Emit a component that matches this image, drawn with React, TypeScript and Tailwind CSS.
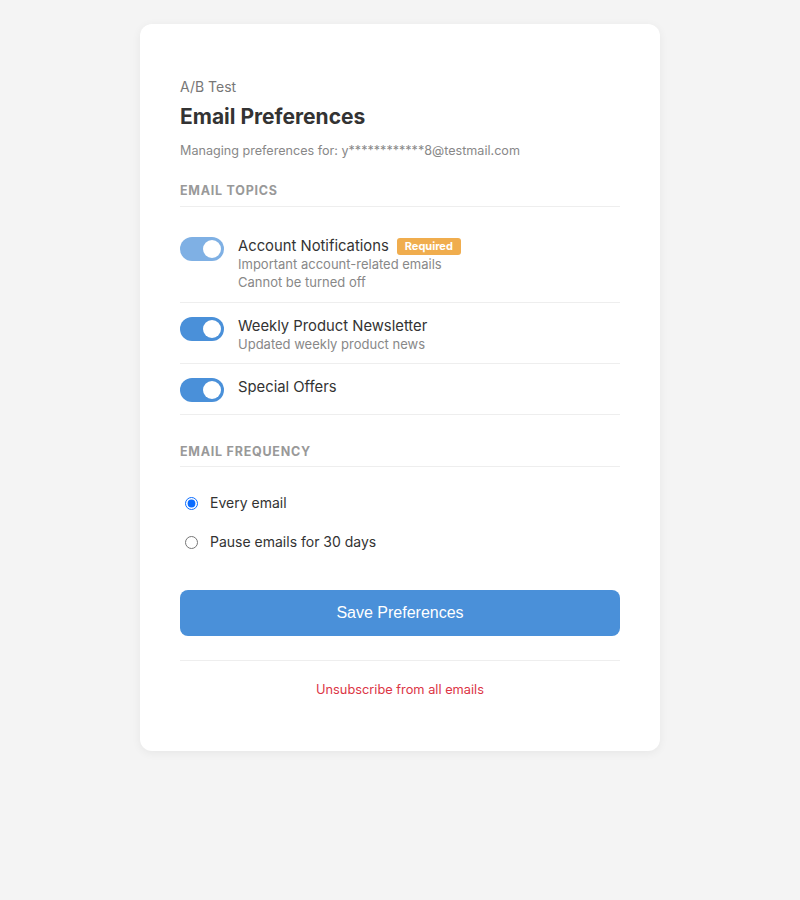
import { useState } from "react";

type Topic = {
  id: string;
  title: string;
  lines: string[];
  required?: boolean;
  pad: string;
};

const topics: Topic[] = [
  {
    id: "account",
    title: "Account Notifications",
    lines: ["Important account-related emails", "Cannot be turned off"],
    required: true,
    pad: "pt-[30px] pb-[11px]",
  },
  {
    id: "newsletter",
    title: "Weekly Product Newsletter",
    lines: ["Updated weekly product news"],
    pad: "pt-[14px] pb-[10px]",
  },
  { id: "offers", title: "Special Offers", lines: [], pad: "pt-[14px] pb-[10px]" },
];

function Toggle({ on, disabled }: { on: boolean; disabled?: boolean }) {
  return (
    <span
      className={`relative inline-flex h-6 w-11 shrink-0 items-center rounded-full ${
        on ? "bg-[#4a90d9]" : "bg-[#cccccc]"
      } ${disabled ? "opacity-70" : ""}`}
    >
      <span
        className={`absolute top-[3px] h-[18px] w-[18px] rounded-full bg-white ${
          on ? "left-[23px]" : "left-[3px]"
        }`}
      />
    </span>
  );
}

export default function App() {
  const [freq, setFreq] = useState("every");

  return (
    <div
      className="min-h-screen bg-[#f4f4f4] pt-6"
      style={{ fontFamily: "Inter, 'Noto Sans', sans-serif" }}
    >
      <div className="mx-auto w-[520px] rounded-xl bg-white px-10 pt-[53px] pb-[51px] shadow-[0_2px_10px_rgba(0,0,0,0.06)]">
        {/* Header */}
        <div className="text-[14px] leading-5 text-[#777]">A/B Test</div>
        <h1 className="mt-[5px] text-[21px] font-bold leading-[30px] text-[#333]">
          Email Preferences
        </h1>
        <p className="mt-[9px] text-[12.6px] leading-5 text-[#888]">
          Managing preferences for: y************8@testmail.com
        </p>

        {/* Topics */}
        <h2 className="mt-[20px] border-b border-[#eeeeee] pb-[5px] text-[12.5px] font-bold uppercase tracking-[0.06em] leading-5 text-[#999]">
          Email Topics
        </h2>
        <div>
          {topics.map((t) => (
            <div key={t.id} className={`flex gap-[14px] border-b border-[#eeeeee] ${t.pad}`}>
              <Toggle on disabled={t.required} />
              <div className="min-h-[26px]">
                <div className="flex items-center gap-2 text-[14.8px] leading-[18px] text-[#333]">
                  {t.title}
                  {t.required && (
                    <span className="rounded-[3px] bg-[#f0ad4e] px-[8px] text-[11px] font-bold leading-[17px] text-white">
                      Required
                    </span>
                  )}
                </div>
                {t.lines.map((l) => (
                  <div key={l} className="text-[13px] leading-[18px] text-[#888]">
                    {l}
                  </div>
                ))}
              </div>
            </div>
          ))}
        </div>

        {/* Frequency */}
        <h2 className="mt-[27px] border-b border-[#eeeeee] pb-[4px] text-[12.5px] font-bold uppercase tracking-[0.06em] leading-5 text-[#999]">
          Email Frequency
        </h2>
        <div className="mt-[26px] flex flex-col gap-[19px]">
          {[
            { id: "every", label: "Every email" },
            { id: "pause", label: "Pause emails for 30 days" },
          ].map((o) => (
            <label
              key={o.id}
              className="flex items-center gap-[12px] pl-[5px] text-[14px] leading-5 text-[#333]"
            >
              <input
                type="radio"
                name="freq"
                checked={freq === o.id}
                onChange={() => setFreq(o.id)}
                className="m-0 h-[13px] w-[13px] accent-[#0a6cff]"
              />
              {o.label}
            </label>
          ))}
        </div>

        <button
          className="mt-[38px] h-[46px] w-full rounded-lg bg-[#4a90d9] text-[16px] font-medium text-white"
          style={{ fontFamily: "'Liberation Sans', Arial, sans-serif" }}
        >
          Save Preferences
        </button>

        <div className="mt-6 border-t border-[#eeeeee] pt-[19px] text-center text-[12.8px] leading-5 text-[#dc3545]">
          Unsubscribe from all emails
        </div>
      </div>
    </div>
  );
}
